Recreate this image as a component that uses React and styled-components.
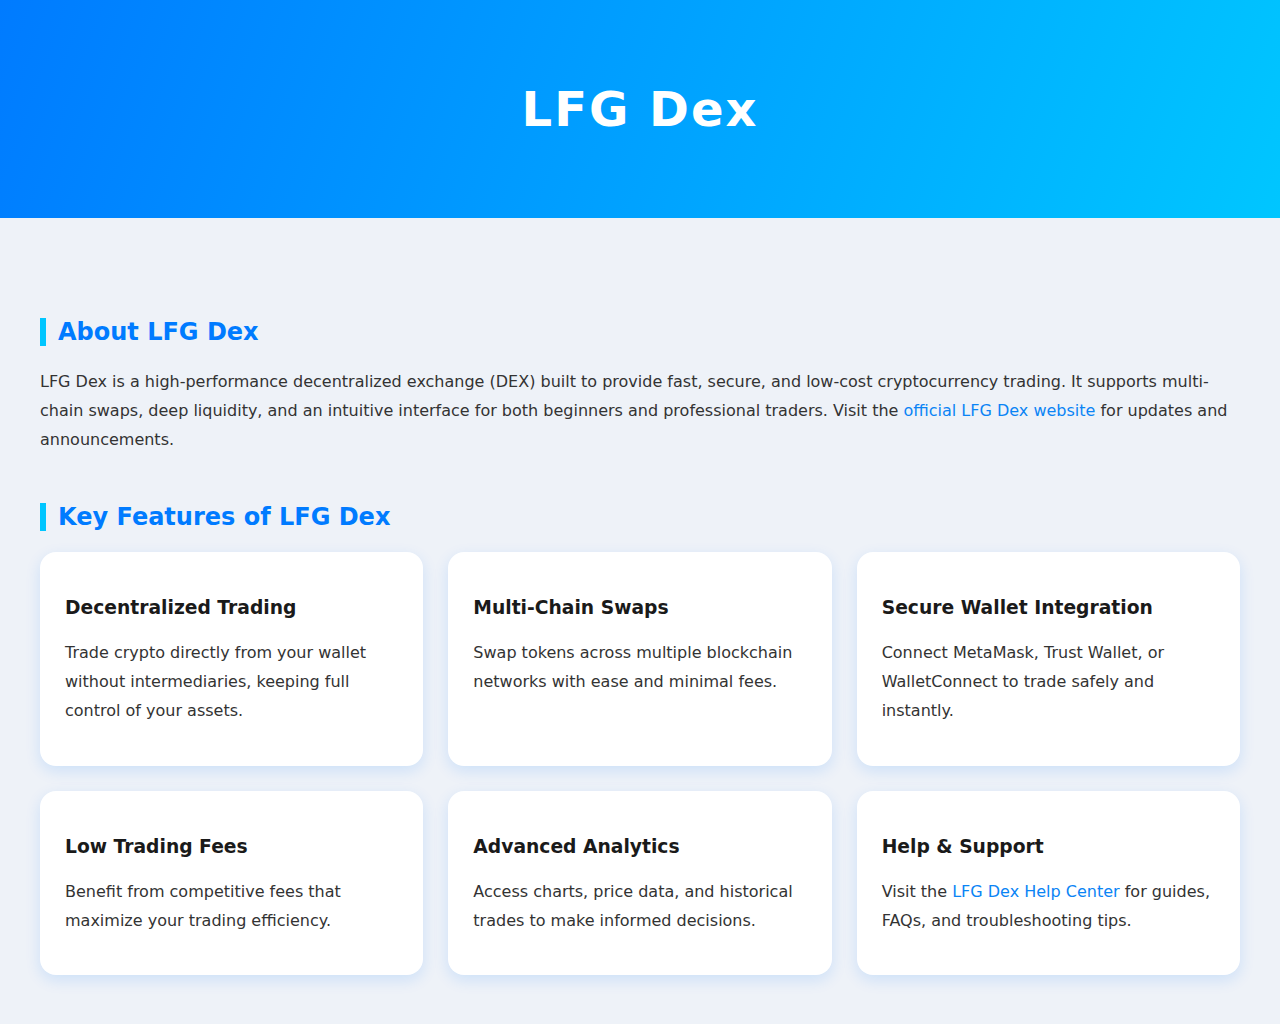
import React from "react";
import styled, { createGlobalStyle } from "styled-components";

const GlobalStyle = createGlobalStyle`
  body {
    margin: 0;
    background: #eef2f8;
    font-family: "DejaVu Sans", Verdana, sans-serif;
    color: #222;
  }
`;

const Header = styled.header`
  height: 218px;
  display: flex;
  align-items: center;
  justify-content: center;
  background: linear-gradient(110deg, #007bff 0%, #00c6ff 100%);
`;

const Title = styled.h1`
  margin: 0;
  color: #fff;
  font-size: 48px;
  font-weight: bold;
  letter-spacing: 2px;
`;

const Main = styled.main`
  padding: 51px 40px 50px;
`;

const SectionTitle = styled.h2`
  margin: 49px 0 21px;
  padding-left: 12px;
  border-left: 6px solid #00c6ff;
  color: #007bff;
  font-size: 24px;
  font-weight: bold;
  line-height: 28px;
`;

const Paragraph = styled.p`
  margin: 22px 0 16px;
  font-size: 16px;
  line-height: 1.8;
  color: #333;
`;

const Link = styled.a`
  color: #0a84f5;
  text-decoration: none;
`;

const Grid = styled.div`
  display: grid;
  grid-template-columns: repeat(3, 1fr);
  gap: 25px;
`;

const Card = styled.div`
  background: #fff;
  border-radius: 16px;
  padding: 25px;
  box-shadow: 0 5px 15px rgba(0, 123, 255, 0.14);
`;

const CardTitle = styled.h3`
  margin: 20px 0 21px;
  font-size: 18.72px;
  font-weight: bold;
  color: #1a1a1a;
`;

const CardText = styled.p`
  margin: 16px 0 15px;
  font-size: 16px;
  line-height: 1.8;
  color: #333;
`;

const features = [
  {
    title: "Decentralized Trading",
    text: "Trade crypto directly from your wallet without intermediaries, keeping full control of your assets.",
  },
  {
    title: "Multi-Chain Swaps",
    text: "Swap tokens across multiple blockchain networks with ease and minimal fees.",
  },
  {
    title: "Secure Wallet Integration",
    text: "Connect MetaMask, Trust Wallet, or WalletConnect to trade safely and instantly.",
  },
  {
    title: "Low Trading Fees",
    text: "Benefit from competitive fees that maximize your trading efficiency.",
  },
  {
    title: "Advanced Analytics",
    text: "Access charts, price data, and historical trades to make informed decisions.",
  },
  {
    title: "Help & Support",
    link: true,
  },
];

export default function App() {
  return (
    <>
      <GlobalStyle />
      <Header>
        <Title>LFG Dex</Title>
      </Header>
      <Main>
        <section>
          <SectionTitle>About LFG Dex</SectionTitle>
          <Paragraph>
            LFG Dex is a high-performance decentralized exchange (DEX) built to
            provide fast, secure, and low-cost cryptocurrency trading. It
            supports multi-chain swaps, deep liquidity, and an intuitive
            interface for both beginners and professional traders. Visit the{" "}
            <Link href="#">official LFG Dex website</Link> for updates and
            announcements.
          </Paragraph>
        </section>
        <section>
          <SectionTitle>Key Features of LFG Dex</SectionTitle>
          <Grid>
            {features.map((f) => (
              <Card key={f.title}>
                <CardTitle>{f.title}</CardTitle>
                <CardText>
                  {f.link ? (
                    <>
                      Visit the <Link href="#">LFG Dex Help Center</Link> for
                      guides, FAQs, and troubleshooting tips.
                    </>
                  ) : (
                    f.text
                  )}
                </CardText>
              </Card>
            ))}
          </Grid>
        </section>
      </Main>
    </>
  );
}
